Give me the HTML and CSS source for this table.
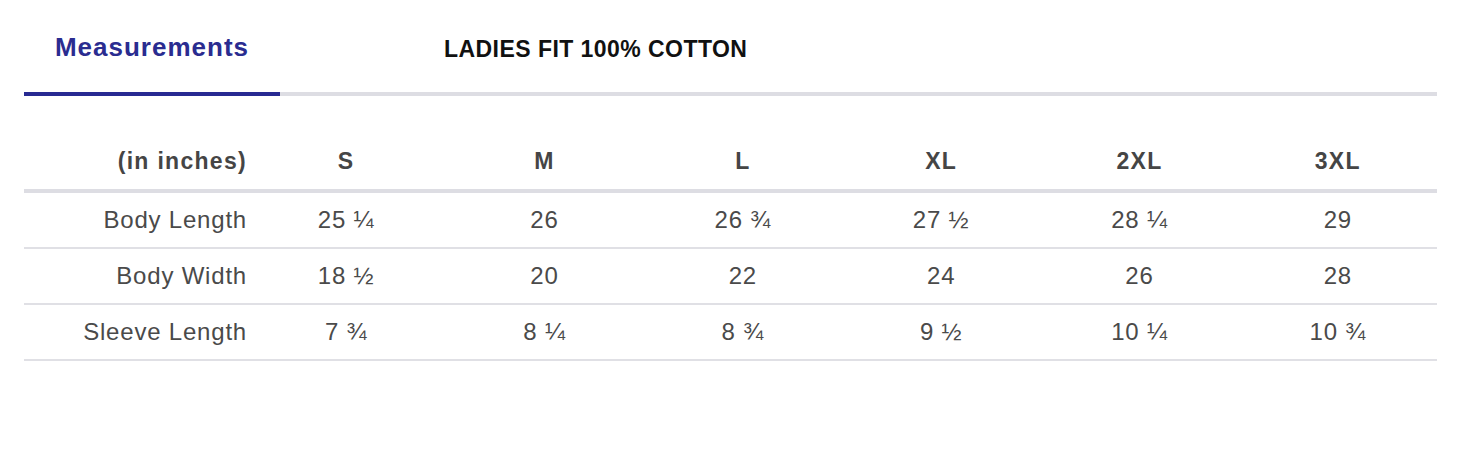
FILE: index.html
```html
<!DOCTYPE html>
<html>
<head>
<meta charset="utf-8">
<link rel="stylesheet" href="styles.css">
</head>
<body>
<div class="wrap">
  <div class="tabs">
    <div class="tab tab-active">Measurements</div>
    <div class="tab tab-plain">LADIES FIT 100% COTTON</div>
  </div>
  <table class="sizes">
    <colgroup>
      <col class="col-label">
      <col><col><col><col><col><col>
    </colgroup>
    <thead>
      <tr>
        <th class="label">(in inches)</th>
        <th>S</th><th>M</th><th>L</th><th>XL</th><th>2XL</th><th>3XL</th>
      </tr>
    </thead>
    <tbody>
      <tr>
        <td class="label">Body Length</td>
        <td>25 ¼</td><td>26</td><td>26 ¾</td><td>27 ½</td><td>28 ¼</td><td>29</td>
      </tr>
      <tr>
        <td class="label">Body Width</td>
        <td>18 ½</td><td>20</td><td>22</td><td>24</td><td>26</td><td>28</td>
      </tr>
      <tr>
        <td class="label">Sleeve Length</td>
        <td>7 ¾</td><td>8 ¼</td><td>8 ¾</td><td>9 ½</td><td>10 ¼</td><td>10 ¾</td>
      </tr>
    </tbody>
  </table>
</div>
</body>
</html>
```

FILE: styles.css
```css
html, body {
  margin: 0;
  padding: 0;
  background: #ffffff;
}

body {
  font-family: "Liberation Sans", Arial, Helvetica, sans-serif;
}

.wrap {
  padding-left: 24px;
  width: 1413px;
}

.tabs {
  display: flex;
  height: 96px;
  box-sizing: border-box;
  border-bottom: 4px solid #dddde3;
}

.tab {
  height: 96px;
  box-sizing: border-box;
  line-height: 30px;
  font-weight: bold;
  white-space: nowrap;
}

.tab-active {
  width: 256px;
  text-align: center;
  padding-top: 32px;
  font-size: 26px;
  letter-spacing: 1px;
  color: #2a2c90;
  border-bottom: 4px solid #282a92;
}

.tab-plain {
  padding-top: 34px;
  padding-left: 164px;
  font-size: 23px;
  letter-spacing: 0.45px;
  color: #111111;
}

.sizes {
  margin-top: 36px;
  width: 1413px;
  table-layout: fixed;
  border-collapse: separate;
  border-spacing: 0;
}

.col-label {
  width: 223px;
}

.sizes th {
  padding: 1px 0 0;
  line-height: 56px;
  font-size: 23px;
  font-weight: bold;
  letter-spacing: 1.3px;
  color: #454545;
  text-align: center;
  border-bottom: 4px solid #dddde3;
}

.sizes td {
  padding: 0;
  line-height: 54px;
  font-size: 24px;
  letter-spacing: 0.8px;
  color: #4a4a4a;
  text-align: center;
  border-bottom: 2px solid #e0e0e5;
}

.sizes .label {
  text-align: right;
  padding-right: 0;
}
```
